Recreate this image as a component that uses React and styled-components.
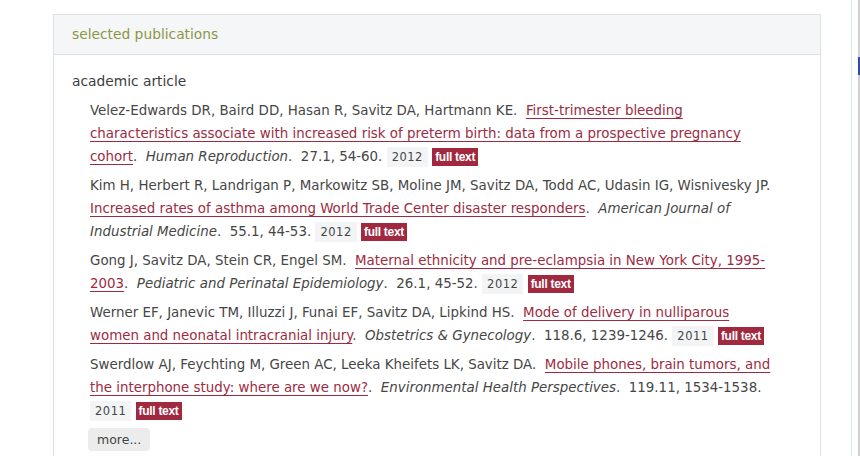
import styled, { createGlobalStyle } from "styled-components"

const publications = [
  {
    authors: "Velez-Edwards DR, Baird DD, Hasan R, Savitz DA, Hartmann KE.",
    title: "First-trimester bleeding characteristics associate with increased risk of preterm birth: data from a prospective pregnancy cohort",
    journal: "Human Reproduction",
    pages: "27.1, 54-60.",
    year: "2012",
  },
  {
    authors: "Kim H, Herbert R, Landrigan P, Markowitz SB, Moline JM, Savitz DA, Todd AC, Udasin IG, Wisnivesky JP.",
    title: "Increased rates of asthma among World Trade Center disaster responders",
    journal: "American Journal of Industrial Medicine",
    pages: "55.1, 44-53.",
    year: "2012",
  },
  {
    authors: "Gong J, Savitz DA, Stein CR, Engel SM.",
    title: "Maternal ethnicity and pre-eclampsia in New York City, 1995-2003",
    journal: "Pediatric and Perinatal Epidemiology",
    pages: "26.1, 45-52.",
    year: "2012",
  },
  {
    authors: "Werner EF, Janevic TM, Illuzzi J, Funai EF, Savitz DA, Lipkind HS.",
    title: "Mode of delivery in nulliparous women and neonatal intracranial injury",
    journal: "Obstetrics & Gynecology",
    pages: "118.6, 1239-1246.",
    year: "2011",
  },
  {
    authors: "Swerdlow AJ, Feychting M, Green AC, Leeka Kheifets LK, Savitz DA.",
    title: "Mobile phones, brain tumors, and the interphone study: where are we now?",
    journal: "Environmental Health Perspectives",
    pages: "119.11, 1534-1538.",
    year: "2011",
  },
]

const App = () => {
  return (
    <Page>
      <GlobalStyle />
      <Main>
        <Panel>
          <PanelHeader>selected publications</PanelHeader>
          <PanelBody>
            <SubTitle>academic article</SubTitle>
            <List>
              {publications.map((p) => (
                <Entry key={p.title}>
                  {p.authors}{"\u00a0 "}
                  <PubLink href="#">{p.title}</PubLink>.{"\u00a0 "}
                  <Journal>{p.journal}</Journal>.{"\u00a0 "}
                  {p.pages}{" "}
                  <Year>{p.year}</Year>{" "}
                  <FullText>full text</FullText>
                </Entry>
              ))}
            </List>
            <MoreButton>more...</MoreButton>
          </PanelBody>
        </Panel>
      </Main>
      <Gutter>
        <Scrollbar>
          <Thumb />
        </Scrollbar>
      </Gutter>
    </Page>
  )
}

const GlobalStyle = createGlobalStyle`
  body {
    margin: 0;
    background: #fff;
    font-family: "DejaVu Sans", "Open Sans", sans-serif;
  }
`

const Page = styled.div`
  display: flex;
  width: 860px;
  height: 456px;
  overflow: hidden;
`

const Main = styled.div`
  width: 852px;
  flex-shrink: 0;
  padding: 14px 30px 0 53px;
  box-sizing: border-box;
  border-right: 1px solid #dbe7e7;
`

const Panel = styled.div`
  border: 1px solid #dde1e3;
  border-bottom: none;
  height: 460px;
`

const PanelHeader = styled.div`
  height: 38px;
  padding-bottom: 1px;
  display: flex;
  align-items: center;
  padding-left: 18px;
  background: #f5f6f8;
  border-bottom: 1px solid #dde1e3;
  color: #8a9842;
  font-size: 13.8px;
`

const PanelBody = styled.div`
  padding: 15px 40px 0 18px;
`

const SubTitle = styled.div`
  font-size: 13.8px;
  color: #3d3d3d;
  line-height: 22px;
  margin-bottom: 7px;
`

const List = styled.div`
  padding-left: 18px;
`

const Entry = styled.div`
  font-size: 13.4px;
  line-height: 23px;
  color: #464646;
  margin-bottom: 6px;
`

const PubLink = styled.a`
  color: #9d2b3f;
  text-decoration: underline;
  text-underline-offset: 3px;
`

const Journal = styled.i`
  font-style: italic;
`

const Year = styled.span`
  display: inline-block;
  background: #f3f4f5;
  font-size: 11.5px;
  letter-spacing: 0.5px;
  line-height: 20px;
  padding: 0 5px;
`

const FullText = styled.span`
  display: inline-block;
  background: #a0283f;
  color: #fff;
  font-family: "Liberation Sans Narrow", "Liberation Sans", sans-serif;
  font-weight: bold;
  font-size: 12px;
  line-height: 18px;
  padding: 0 3px;
  letter-spacing: -0.3px;
`

const MoreButton = styled.button`
  margin-left: 16px;
  margin-top: 0;
  background: #ececec;
  border: none;
  border-radius: 4px;
  padding: 4px 9px;
  font-family: "DejaVu Sans", "Open Sans", sans-serif;
  font-size: 12.5px;
  color: #444;
`

const Gutter = styled.div`
  flex: 1;
  display: flex;
  justify-content: flex-end;
`

const Scrollbar = styled.div`
  width: 2px;
  background: #cfcfcf;
  padding-top: 57px;
`

const Thumb = styled.div`
  width: 2px;
  height: 18px;
  background: #2d4fa3;
`

export default App
